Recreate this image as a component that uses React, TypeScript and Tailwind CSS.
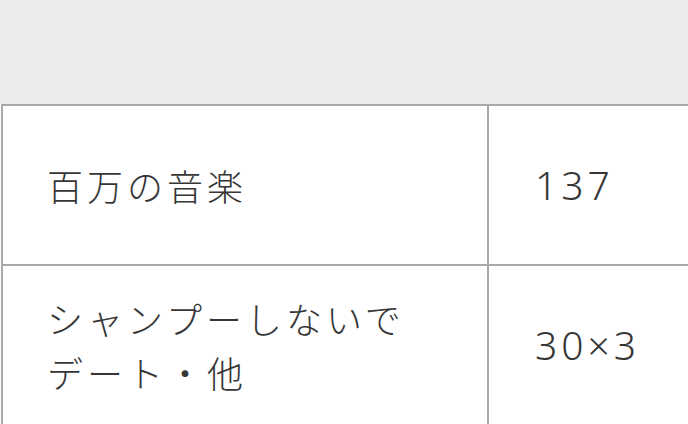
const rows = [
  { label: ["百万の音楽"], value: "137" },
  { label: ["シャンプーしないで", "デート・他"], value: "30×3" },
]

export default function App() {
  return (
    <div
      className="w-[688px] h-[424px] overflow-hidden bg-white text-[#363636]"
      style={{ fontFamily: '"Noto Sans CJK JP", "Noto Sans", sans-serif' }}
    >
      <div className="h-[104px] bg-[#ebebeb]" />
      <div className="ml-px w-[800px] border-t-2 border-l-2 border-[#a8a8a8]">
        {rows.map((row, idx) => (
          <div key={idx} className="flex h-[160px] border-b-2 border-[#a8a8a8]">
            <div className="w-[486px] shrink-0 border-r-2 border-[#a8a8a8] px-[44px] flex items-center">
              <div className="text-[36px] leading-[54px] tracking-[4px] font-light">
                {row.label.map((line) => (
                  <div key={line}>{line}</div>
                ))}
              </div>
            </div>
            <div className="flex-1 px-[46px] flex items-center">
              <span
                className="text-[39px] leading-[54px] tracking-[4px] font-light"
                style={{ fontFamily: '"Noto Sans", sans-serif' }}
              >
                {row.value}
              </span>
            </div>
          </div>
        ))}
      </div>
    </div>
  )
}
